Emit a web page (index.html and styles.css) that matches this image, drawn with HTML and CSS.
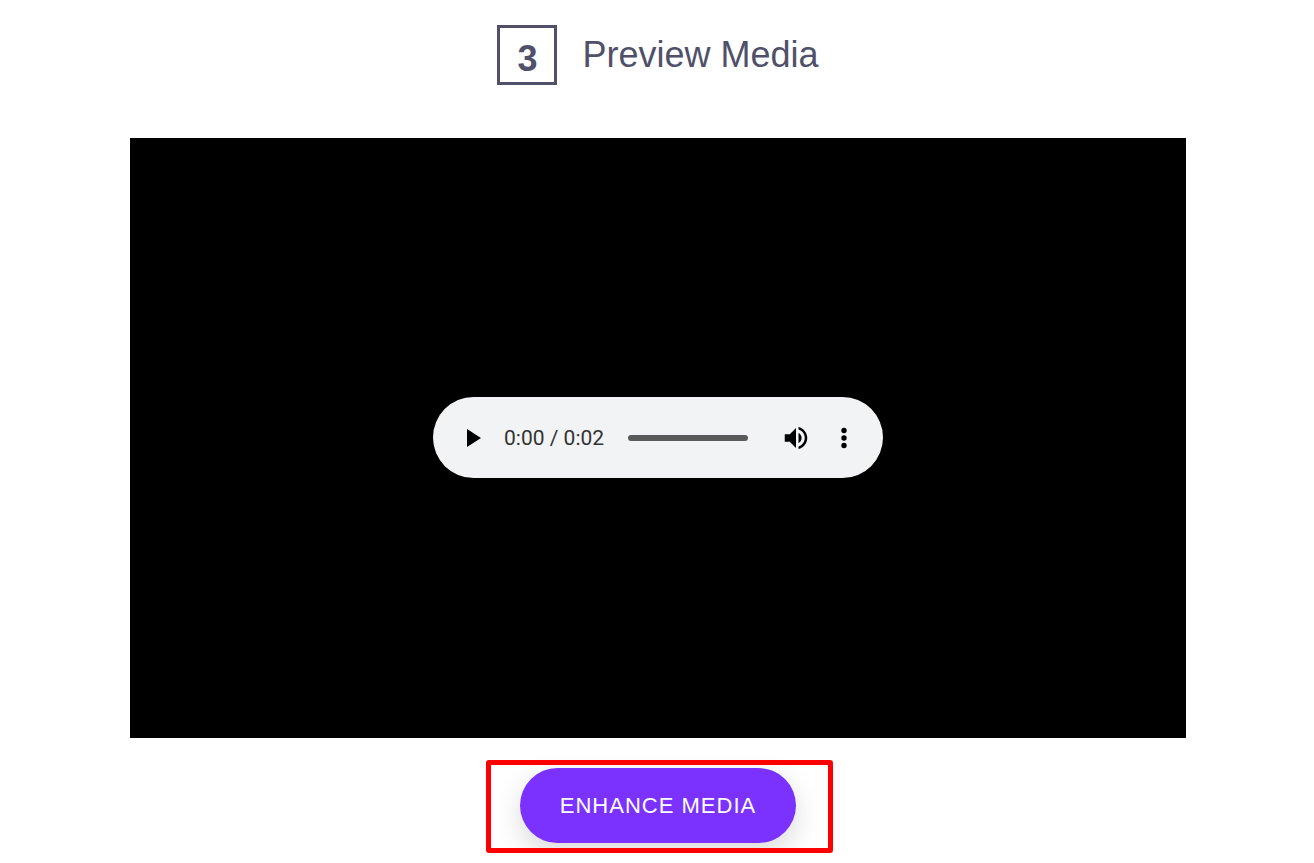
FILE: index.html
```html
<!DOCTYPE html>
<html lang="en">

<head>
    <meta charset="UTF-8" />
    <meta name="viewport" content="width=device-width, initial-scale=1" />
    <title>Preview Media</title>
    <link rel="stylesheet" href="styles.css">
</head>

<body>

    <main class="step">
        <h2 class="step-title">
            <span class="step-number">3</span>
            <span>Preview Media</span>
        </h2>

        <div class="preview">
            <div class="player">
                <button type="button" class="icon-button" aria-label="Play">
                    <svg width="14" height="18" viewBox="0 0 14 18"><path d="M0 0v18l14-9z" /></svg>
                </button>
                <span class="time">0:00 / 0:02</span>
                <input type="range" class="seek" min="0" max="2" value="0" aria-label="Seek" />
                <button type="button" class="icon-button volume" aria-label="Mute">
                    <svg width="30" height="30" viewBox="0 0 24 24"><path d="M3 9v6h4l5 5V4L7 9H3zm13.5 3c0-1.77-1.02-3.29-2.5-4.03v8.05c1.48-.73 2.5-2.25 2.5-4.02zM14 3.23v2.06c2.89.86 5 3.54 5 6.71s-2.11 5.85-5 6.71v2.06c4.01-.91 7-4.49 7-8.77s-2.99-7.86-7-8.77z" /></svg>
                </button>
                <button type="button" class="icon-button more" aria-label="More options">
                    <svg width="6" height="20" viewBox="0 0 6 20"><circle cx="3" cy="2.5" r="2.7" /><circle cx="3" cy="10" r="2.7" /><circle cx="3" cy="17.5" r="2.7" /></svg>
                </button>
            </div>
        </div>

        <div class="actions">
            <button type="button" class="enhance">ENHANCE MEDIA</button>
        </div>
    </main>

</body>

</html>
```

FILE: styles.css
```css
body {
    font-family: Arial, "Liberation Sans", sans-serif;
    background: #fff;
    margin: 0;
    padding: 0;
}

.step {
    padding: 25px 128px 10px 130px;
}

.step-title {
    display: flex;
    justify-content: center;
    align-items: center;
    gap: 25px;
    margin: 0 0 53px;
    font-size: 36px;
    font-weight: 400;
    line-height: 60px;
    color: #50506a;
}

.step-number {
    box-sizing: border-box;
    width: 60px;
    height: 60px;
    border: 3px solid #50506a;
    font-weight: 700;
    line-height: 62px;
    text-align: center;
}

.preview {
    box-sizing: border-box;
    display: flex;
    justify-content: center;
    align-items: center;
    height: 600px;
    padding-bottom: 1px;
    background: #000;
}

.player {
    box-sizing: border-box;
    display: flex;
    align-items: center;
    width: 450px;
    height: 81px;
    padding: 0 36px 0 34px;
    background: #f1f3f4;
    border-radius: 41px;
}

.icon-button {
    display: flex;
    padding: 0;
    border: none;
    background: none;
    cursor: pointer;
}

.icon-button svg {
    overflow: visible;
}

.time {
    margin: 0 24px 0 23px;
    font-family: Roboto, sans-serif;
    font-size: 21px;
    line-height: 24px;
    color: #323333;
    white-space: nowrap;
}

.seek {
    appearance: none;
    flex: 1;
    min-width: 0;
    height: 6px;
    margin: 0;
    border-radius: 3px;
    background: #5a5a5a;
}

.seek::-webkit-slider-thumb {
    appearance: none;
    width: 0;
    height: 0;
}

.volume {
    margin: 0 30px 0 33px;
}

.actions {
    position: relative;
    width: 276px;
    margin: 30px auto 0;
}

.enhance {
    width: 100%;
    height: 75px;
    padding: 0;
    border: none;
    border-radius: 38px;
    background: #7b32ff;
    box-shadow: 0 10px 28px rgba(0, 0, 0, 0.15);
    font-family: inherit;
    font-size: 22px;
    letter-spacing: 1px;
    color: #fff;
    cursor: pointer;
}

/* red frame around the button */
.actions::after {
    content: "";
    position: absolute;
    top: -8px;
    right: -37px;
    bottom: -10px;
    left: -34px;
    border: 5px solid #f00;
    border-radius: 3px;
    pointer-events: none;
}
```
